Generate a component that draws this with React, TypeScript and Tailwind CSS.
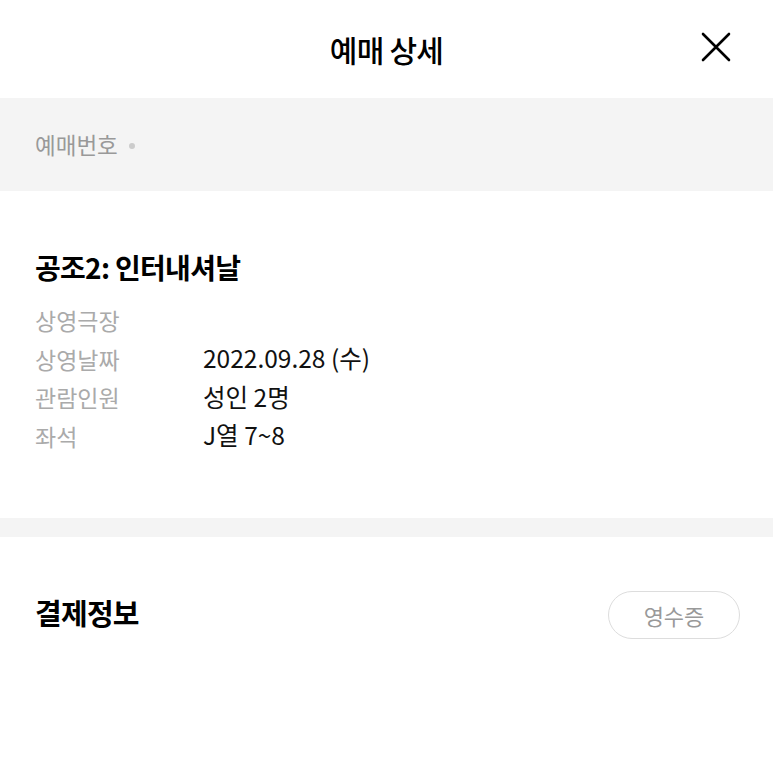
const rows = [
  { label: "상영극장", value: "" },
  { label: "상영날짜", value: "2022.09.28 (수)" },
  { label: "관람인원", value: "성인 2명" },
  { label: "좌석", value: "J열 7~8" },
];

export default function App() {
  return (
    <div
      className="min-h-screen bg-white text-black"
      style={{ fontFamily: '"Noto Sans CJK KR", "Noto Sans", sans-serif' }}
    >
      {/* Header */}
      <header className="relative flex h-[98px] items-center justify-center">
        <h1 className="text-[30px] font-medium tracking-tight">예매 상세</h1>
        <button className="absolute right-[42px] top-[32px] text-black">
          <svg width="30" height="30" viewBox="0 0 30 30" fill="none" stroke="currentColor" strokeWidth="2.6" strokeLinecap="round">
            <path d="M2 2L28 28M28 2L2 28" />
          </svg>
        </button>
      </header>

      {/* Reservation number */}
      <div className="flex h-[93px] items-center bg-[#f4f4f4] px-[35px]">
        <span className="text-[22.5px] text-[#999999]">예매번호</span>
        <span className="ml-[11px] mt-[2px] h-[6px] w-[6px] rounded-full bg-[#cccccc]" />
      </div>

      {/* Movie info */}
      <section className="px-[35px] pb-[63px] pt-[55px]">
        <h2 className="text-[28px] font-bold tracking-tight">공조2: 인터내셔날</h2>
        <dl className="mt-[13px] flex flex-col">
          {rows.map((r) => (
            <div key={r.label} className="flex h-[38.5px] items-center">
              <dt className="w-[168px] text-[23px] text-[#aaaaaa]">{r.label}</dt>
              <dd className="text-[24.5px] text-[#111111]">{r.value}</dd>
            </div>
          ))}
        </dl>
      </section>

      <div className="h-[19px] bg-[#f4f4f4]" />

      {/* Payment */}
      <section className="flex items-center justify-between pl-[35px] pr-[33px] pt-[54px]">
        <h2 className="mb-[5px] text-[29px] font-bold tracking-tight">결제정보</h2>
        <button className="flex h-[48px] w-[132px] items-center justify-center rounded-full border border-[#dddddd] text-[22px] text-[#999999]">
          영수증
        </button>
      </section>
    </div>
  );
}
